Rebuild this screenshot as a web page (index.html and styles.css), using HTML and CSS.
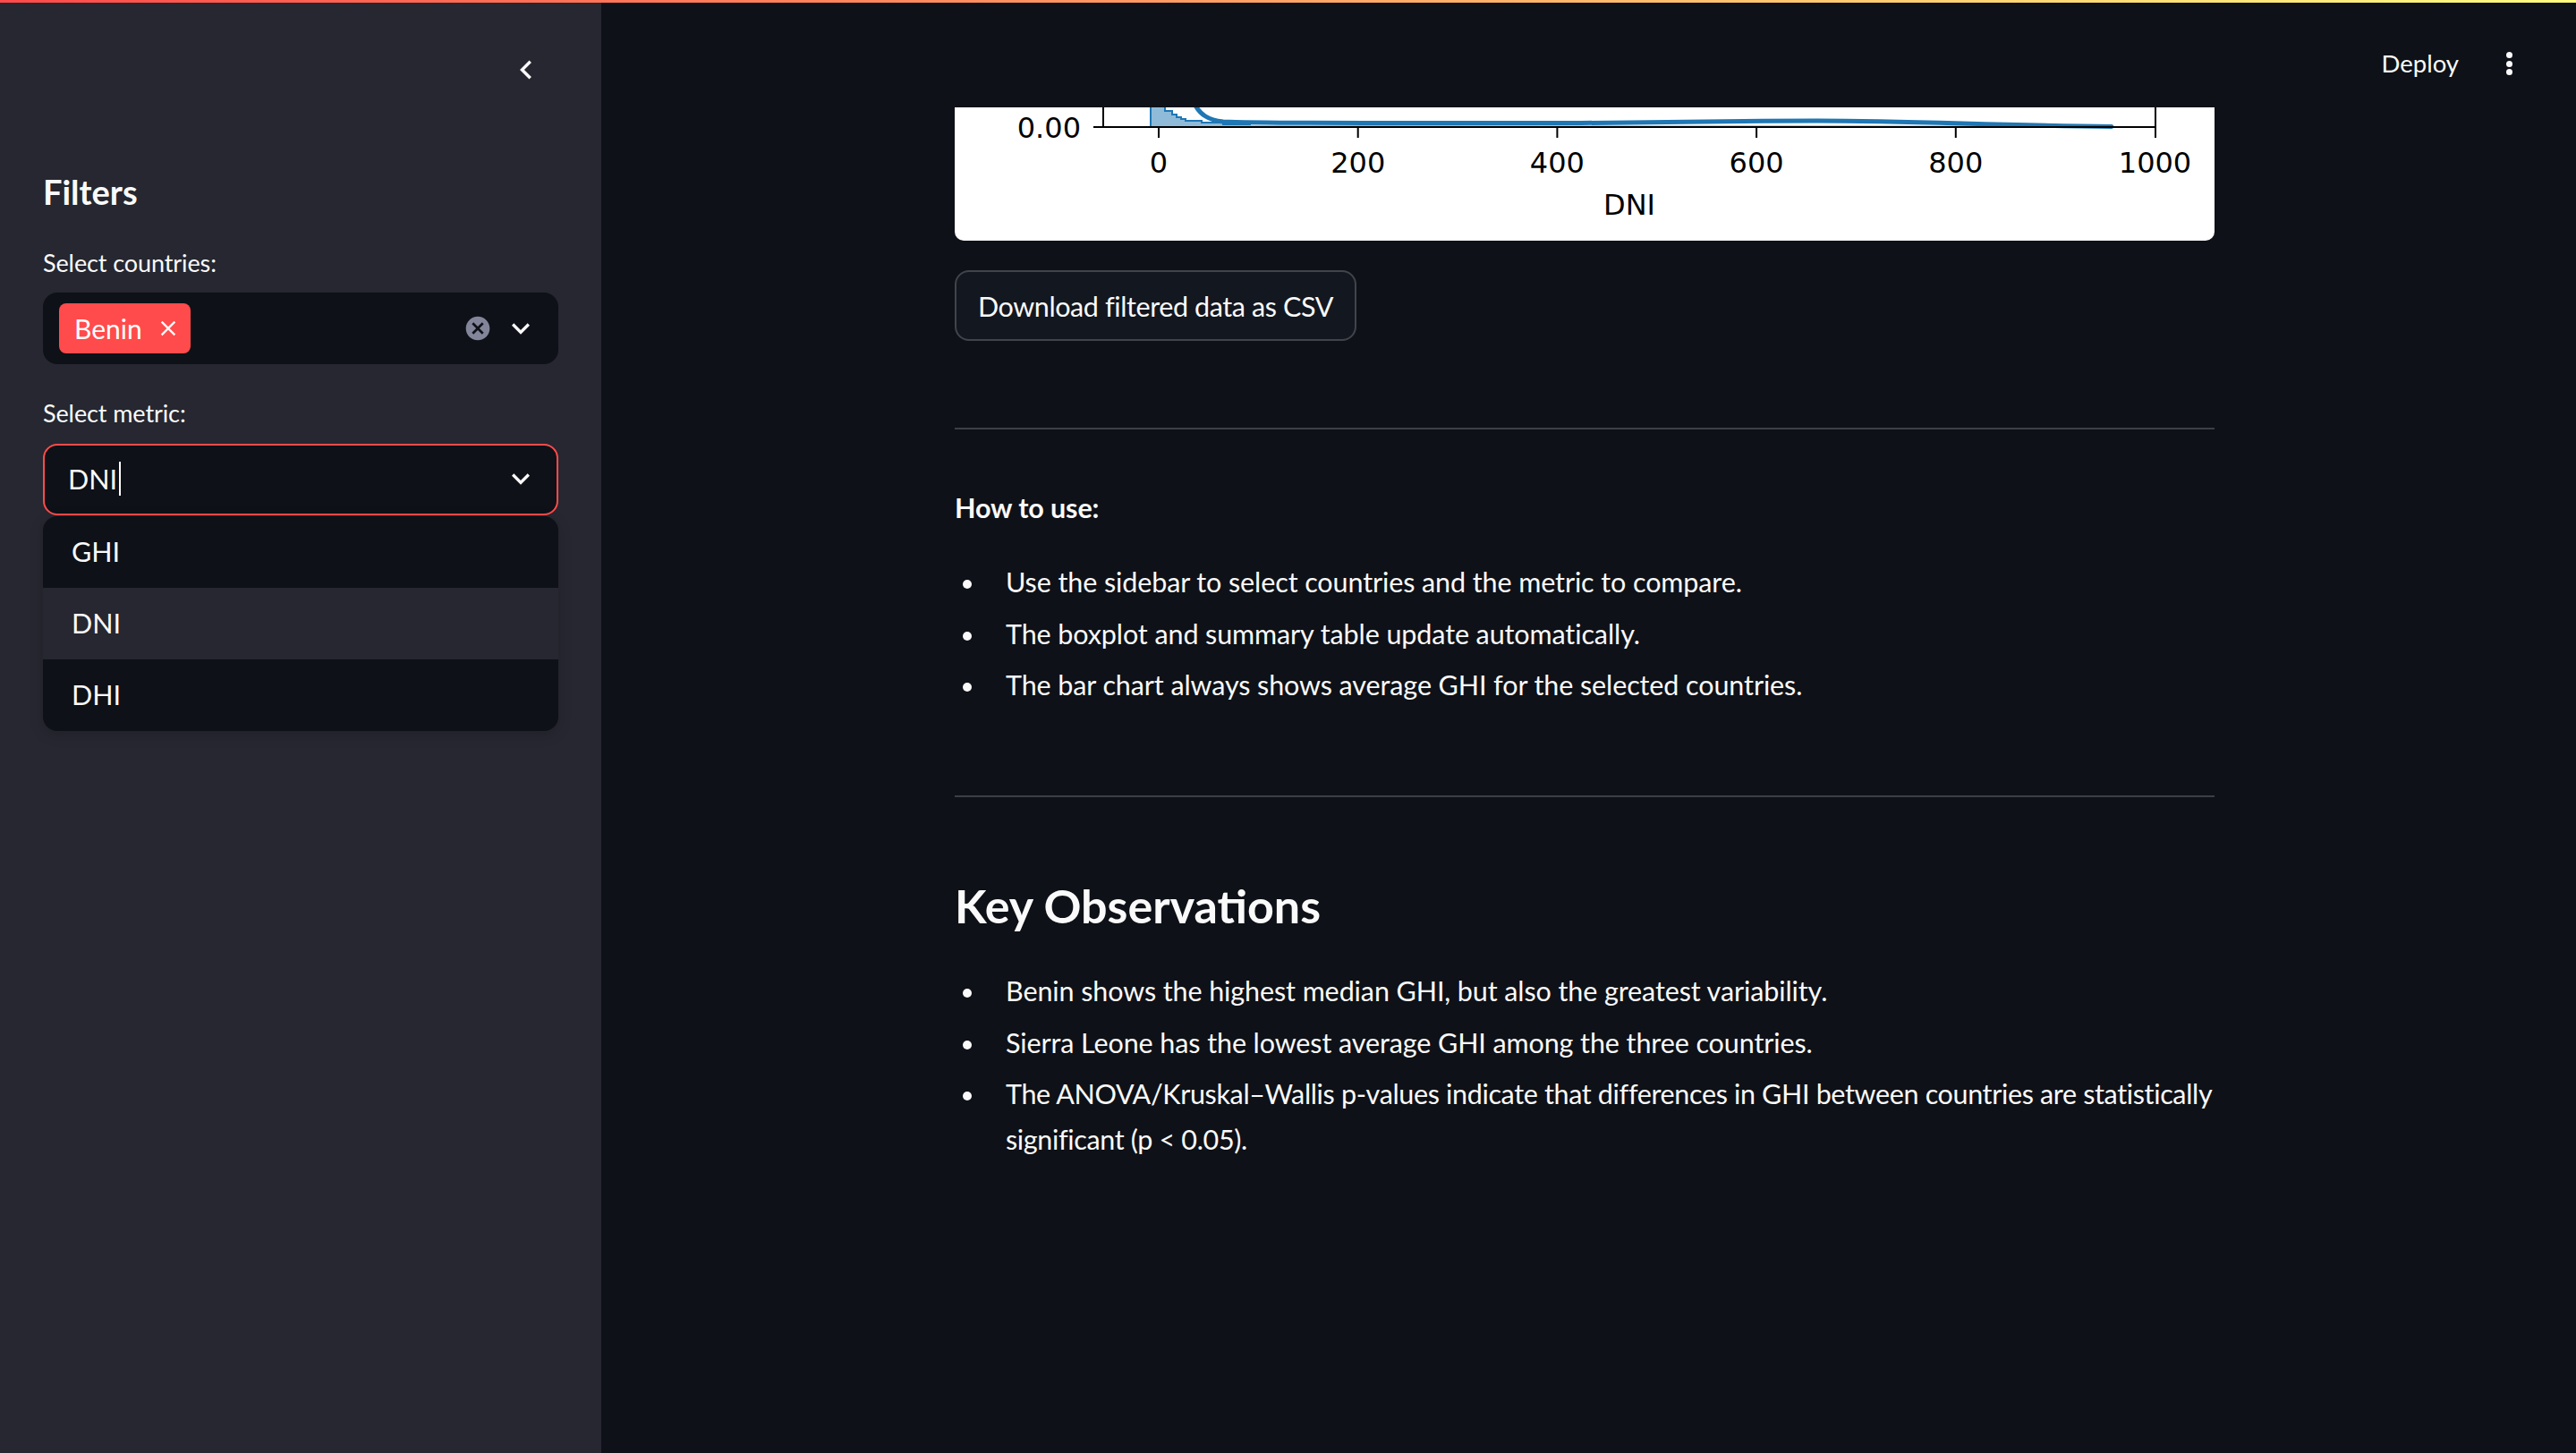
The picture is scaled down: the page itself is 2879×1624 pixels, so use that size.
FILE: index.html
```html
<!DOCTYPE html>
<html lang="en">
<head>
<meta charset="utf-8">
<title>Solar Dashboard</title>
<link rel="stylesheet" href="styles.css">
</head>
<body>
<div class="topline"></div>
<div class="app">
  <aside class="sidebar">
    <div class="sb-top">
      <span class="collapse">
        <svg viewBox="0 0 24 24"><path fill="#fafafa" d="M15.41 7.41L14 6l-6 6 6 6 1.41-1.41L10.83 12z"/></svg>
      </span>
    </div>
    <h2 class="sb-title">Filters</h2>

    <div class="field">
      <label class="field-label">Select countries:</label>
      <div class="multiselect">
        <span class="tag">Benin<svg viewBox="0 0 24 24"><path fill="#fff" d="M19 6.41L17.59 5 12 10.59 6.41 5 5 6.41 10.59 12 5 17.59 6.41 19 12 13.41 17.59 19 19 17.59 13.41 12z"/></svg></span>
        <span class="grow"></span>
        <svg class="clear" viewBox="0 0 24 24"><path fill="#83869a" d="M12 2C6.47 2 2 6.47 2 12s4.47 10 10 10 10-4.47 10-10S17.53 2 12 2zm5 13.59L15.59 17 12 13.41 8.41 17 7 15.59 10.59 12 7 8.41 8.41 7 12 10.59 15.59 7 17 8.41 13.41 12 17 15.59z"/></svg>
        <svg class="chev" viewBox="0 0 24 24"><path fill="#fafafa" d="M16.59 8.59L12 13.17 7.41 8.59 6 10l6 6 6-6z"/></svg>
      </div>
    </div>

    <div class="field second">
      <label class="field-label">Select metric:</label>
      <div class="select">
        <span class="value">DNI</span><span class="caret"></span>
        <span class="grow"></span>
        <svg class="chev" viewBox="0 0 24 24"><path fill="#fafafa" d="M16.59 8.59L12 13.17 7.41 8.59 6 10l6 6 6-6z"/></svg>
      </div>
      <ul class="menu">
        <li>GHI</li>
        <li class="hl">DNI</li>
        <li>DHI</li>
      </ul>
    </div>
  </aside>

  <main class="main">
    <header class="topbar">
      <span class="deploy">Deploy</span>
      <span class="kebab"><i></i><i></i><i></i></span>
    </header>

    <div class="content">
      <div class="chart">
        <svg width="1408" height="149" viewBox="0 0 1408 149">
          <path d="M219,22 V-4 H235 V4 H243 V8 H248 V11 H253 V13 H258 V15 H276 V17 H300 V19 H330 V20 L1290,20.5 V22 Z" fill="#8fbbd9"/>
          <path d="M219,22 V-4 M235,-4 V4 H243 V8 H248 V11 H253 V13 H258 V15 H276 V17 H300 V19 H330 V20" fill="none" stroke="#1f77b4" stroke-width="2"/>
          <path d="M268,-4 C274,8 283,14 300,16 C330,17.5 400,17.5 700,17.5 C820,17 880,15 960,15 C1060,15 1150,19.5 1293,21.5" fill="none" stroke="#1f77b4" stroke-width="5" stroke-linecap="round"/>
          <g stroke="#000" stroke-width="2" fill="none">
            <line x1="155" y1="22" x2="1343" y2="22"/>
            <line x1="166" y1="-2" x2="166" y2="22"/>
            <line x1="1342" y1="-2" x2="1342" y2="34"/>
            <line x1="228" y1="22" x2="228" y2="34"/>
            <line x1="450.7" y1="22" x2="450.7" y2="34"/>
            <line x1="673.4" y1="22" x2="673.4" y2="34"/>
            <line x1="896.1" y1="22" x2="896.1" y2="34"/>
            <line x1="1118.8" y1="22" x2="1118.8" y2="34"/>
          </g>
          <g class="ticks" font-family="DejaVu Sans, sans-serif" font-size="32" fill="#000">
            <text x="141" y="34" text-anchor="end">0.00</text>
            <text x="228" y="73" text-anchor="middle">0</text>
            <text x="450.7" y="73" text-anchor="middle">200</text>
            <text x="673.4" y="73" text-anchor="middle">400</text>
            <text x="896.1" y="73" text-anchor="middle">600</text>
            <text x="1118.8" y="73" text-anchor="middle">800</text>
            <text x="1341.5" y="73" text-anchor="middle">1000</text>
            <text x="754" y="120" text-anchor="middle">DNI</text>
          </g>
        </svg>
      </div>

      <button class="dl">Download filtered data as CSV</button>

      <hr class="div first">

      <p class="md-strong">How to use:</p>
      <ul class="md">
        <li>Use the sidebar to select countries and the metric to compare.</li>
        <li>The boxplot and summary table update automatically.</li>
        <li>The bar chart always shows average GHI for the selected countries.</li>
      </ul>

      <hr class="div second">

      <h3 class="kh">Key Observations</h3>
      <ul class="md obs">
        <li>Benin shows the highest median GHI, but also the greatest variability.</li>
        <li>Sierra Leone has the lowest average GHI among the three countries.</li>
        <li class="tight"><span class="nw">The ANOVA/Kruskal–Wallis p-values indicate that differences in GHI between countries are statistically<br>significant (p &lt; 0.05).</span></li>
      </ul>
    </div>
  </main>
</div>
</body>
</html>
```

FILE: styles.css
```css
* { box-sizing: border-box; }
html, body { margin: 0; padding: 0; }
body {
  width: 2879px;
  height: 1624px;
  overflow: hidden;
  background: #0e1117;
  color: #fafafa;
  font-family: Lato, "Noto Sans", sans-serif;
}
.topline {
  position: absolute;
  top: 0; left: 0; right: 0;
  height: 3px;
  background: linear-gradient(90deg, #ff4b4b, #fffd80);
  z-index: 10;
}
.app { display: flex; height: 1624px; }

/* Sidebar */
.sidebar {
  width: 672px;
  flex: none;
  background: #262730;
  padding: 0 48px;
}
.sb-top { display: flex; justify-content: flex-end; padding-top: 57px; margin-right: 15px; }
.collapse svg { width: 42px; height: 42px; display: block; }
.sb-title {
  margin: 93px 0 0;
  font-size: 38px;
  font-weight: 700;
  line-height: 1.2;
}
.field-label {
  display: block;
  font-size: 27px;
  letter-spacing: -0.1px;
  line-height: 40px;
  margin-top: 36px;
  margin-bottom: 13px;
}
.field.second .field-label { margin-top: 35px; margin-bottom: 14px; }
.grow { flex: 1; }
.multiselect {
  height: 80px;
  background: #0e1117;
  border-radius: 16px;
  display: flex;
  align-items: center;
  padding: 0 22px 0 18px;
}
.tag {
  height: 56px;
  background: #ff4b4b;
  border-radius: 8px;
  display: flex;
  align-items: center;
  padding: 0 11px 0 17px;
  font-size: 30px;
  color: #fff;
}
.tag svg { width: 28px; height: 28px; margin-left: 15px; display: block; }
.clear { width: 32px; height: 32px; display: block; margin-right: 12px; }
.chev { width: 40px; height: 40px; display: block; }
.select {
  height: 80px;
  border: 2px solid #ff4b4b;
  border-radius: 16px;
  background: #0e1117;
  display: flex;
  align-items: center;
  padding: 0 20px 2px 26px;
  font-size: 30.5px;
}
.caret { width: 2px; height: 38px; background: #fafafa; margin-left: 2px; }
.menu {
  list-style: none;
  margin: 1px 0 0;
  padding: 0;
  background: #0e1117;
  border-radius: 16px;
  overflow: hidden;
  box-shadow: 0 4px 16px rgba(0, 0, 0, 0.16);
}
.menu li {
  height: 80px;
  display: flex;
  align-items: center;
  padding: 0 0 2px 32px;
  font-size: 30.5px;
}
.menu li.hl { background: #262730; }

/* Main */
.main { flex: 1; min-width: 0; display: flex; flex-direction: column; }
.topbar {
  height: 120px;
  flex: none;
  display: flex;
  justify-content: flex-end;
  align-items: flex-start;
  padding: 51px 71px 0 0;
}
.deploy { font-size: 27.5px; line-height: 40px; }
.kebab { display: flex; flex-direction: column; gap: 2.5px; margin: 7px 0 0 53px; }
.kebab i { display: block; width: 7px; height: 7px; border-radius: 50%; background: #fafafa; }

.content { width: 1408px; margin-left: 395px; }
.chart {
  height: 149px;
  background: #fff;
  border-radius: 0 0 10px 10px;
  overflow: hidden;
}
.chart svg { display: block; }
.dl {
  display: flex;
  align-items: center;
  margin-top: 33px;
  height: 79px;
  padding: 0 24px;
  border: 2px solid rgba(250, 250, 250, 0.2);
  border-radius: 16px;
  background: #13171f;
  color: #fafafa;
  font-family: Lato, "Noto Sans", sans-serif;
  font-size: 30.5px;
  letter-spacing: -0.4px;
}
.div { margin: 97px 0 0; border: none; height: 2px; background: rgba(250, 250, 250, 0.2); }
.div.second { margin-top: 97px; }
.md-strong { margin: 62px 0 0; font-weight: 700; font-size: 30.5px; letter-spacing: -0.1px; line-height: 51.2px; }
.md { margin: 32px 0 0; padding: 0; list-style: none; }
.md li { display: flex; font-size: 30.5px; letter-spacing: -0.1px; line-height: 51.2px; }
.md li.tight { letter-spacing: -0.35px; }
.md li + li { margin-top: 6.4px; }
.md li::before {
  content: "";
  flex: none;
  width: 10px;
  height: 10px;
  border-radius: 50%;
  background: #fafafa;
  margin: 23px 38px 0 9px;
}
.nw { white-space: nowrap; }
.kh { margin: 90px 0 0; font-size: 52px; font-weight: 700; line-height: 1.2; }
.md.obs { margin-top: 39px; }
```
